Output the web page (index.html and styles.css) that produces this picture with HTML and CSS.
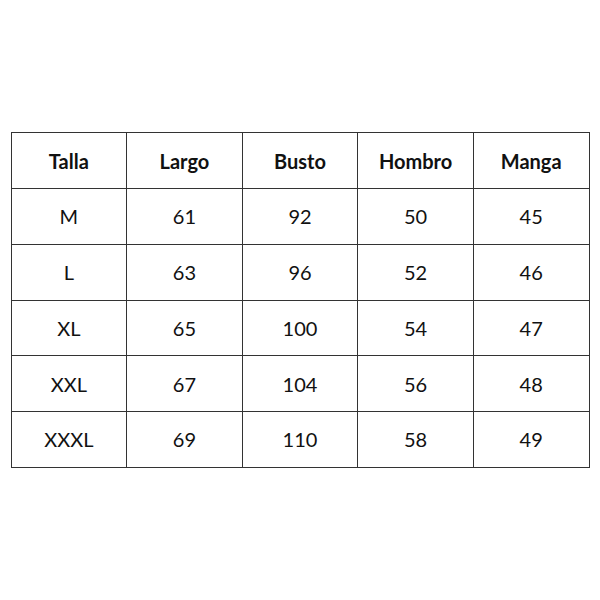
FILE: index.html
```html
<!DOCTYPE html>
<html>
<head>
<meta charset="utf-8">
<link rel="stylesheet" href="styles.css">
</head>
<body>
<div class="page">
<table class="sizes">
<tr class="head"><th>Talla</th><th>Largo</th><th>Busto</th><th>Hombro</th><th>Manga</th></tr>
<tr><td>M</td><td>61</td><td>92</td><td>50</td><td>45</td></tr>
<tr><td>L</td><td>63</td><td>96</td><td>52</td><td>46</td></tr>
<tr><td>XL</td><td>65</td><td>100</td><td>54</td><td>47</td></tr>
<tr><td>XXL</td><td>67</td><td>104</td><td>56</td><td>48</td></tr>
<tr><td>XXXL</td><td>69</td><td>110</td><td>58</td><td>49</td></tr>
</table>
</div>
</body>
</html>
```
FILE: styles.css
```css
html, body { margin: 0; padding: 0; background: #fff; }
.page {
  width: 600px;
  height: 600px;
  display: flex;
  align-items: center;
  justify-content: center;
}
.sizes {
  border-collapse: collapse;
  width: 579px;
  font-family: Lato, "Open Sans", sans-serif;
  font-size: 20px;
  color: #111;
  table-layout: fixed;
}
.sizes th, .sizes td {
  border: 1px solid #333;
  height: 54.7px;
  padding: 0;
  text-align: center;
  vertical-align: middle;
}
.sizes th { font-weight: 700; }
.sizes td { font-weight: 400; }
```
